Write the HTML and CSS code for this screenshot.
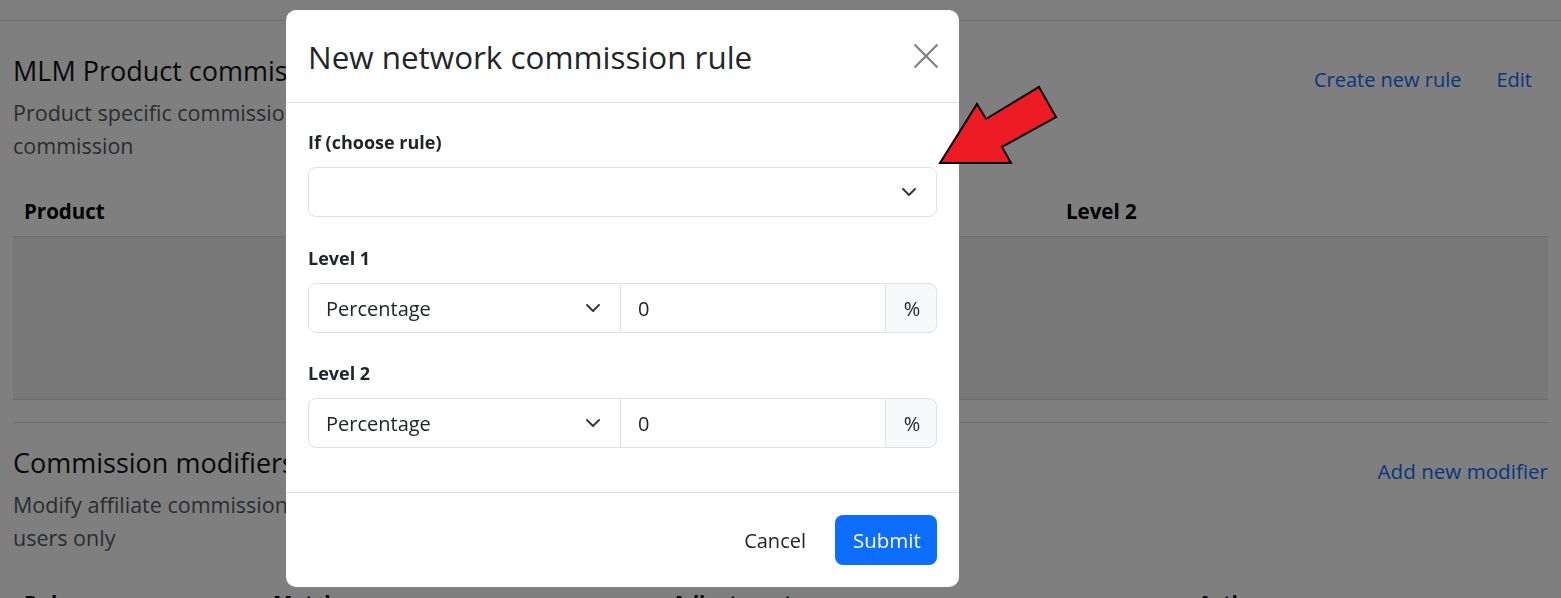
FILE: index.html
```html
<!DOCTYPE html>
<html lang="en">
<head>
<meta charset="utf-8">
<title>Network commission</title>
<link rel="stylesheet" href="styles.css">
</head>
<body>
<div class="topbar"></div>
<main class="content">
  <section class="section">
    <div class="section-head">
      <div class="section-text text-a">
        <h4 class="section-title">MLM Product commissions</h4>
        <p class="section-desc">Product specific commission rules override the default commission</p>
      </div>
      <div class="section-links">
        <a class="link-btn" href="#">Create new rule</a>
        <a class="link-btn" href="#">Edit</a>
      </div>
    </div>
    <div class="table">
      <div class="thead thead-3">
        <div>Product</div>
        <div>Level 1</div>
        <div>Level 2</div>
      </div>
      <div class="tbody"></div>
    </div>
  </section>
  <hr class="divider">
  <section class="section section-2">
    <div class="section-head">
      <div class="section-text text-b">
        <h4 class="section-title">Commission modifiers</h4>
        <p class="section-desc">Modify affiliate commission based on custom rules for the referred users only</p>
      </div>
      <div class="section-links links-tight">
        <a class="link-btn" href="#">Add new modifier</a>
      </div>
    </div>
    <div class="table">
      <div class="thead thead-4">
        <div>Rule</div>
        <div>Match</div>
        <div>Adjustment</div>
        <div>Action</div>
      </div>
    </div>
  </section>
</main>

<div class="backdrop"></div>

<div class="modal">
  <div class="modal-header">
    <h5 class="modal-title">New network commission rule</h5>
    <button class="btn-close" aria-label="Close">
      <svg width="26" height="26" viewBox="0 0 26 26"><path d="M1.5 1.5 L24.5 24.5 M24.5 1.5 L1.5 24.5" stroke="#808080" stroke-width="2.2" fill="none"/></svg>
    </button>
  </div>
  <div class="modal-body">
    <label class="form-label">If (choose rule)</label>
    <div class="form-select full">
      <span></span>
      <svg class="chev" width="16" height="16" viewBox="0 0 16 16"><path d="m2 5 6 6 6-6" stroke="#343a40" stroke-width="2" fill="none" stroke-linecap="round" stroke-linejoin="round"/></svg>
    </div>

    <label class="form-label">Level 1</label>
    <div class="input-group">
      <div class="form-select grp-select">
        <span>Percentage</span>
        <svg class="chev" width="16" height="16" viewBox="0 0 16 16"><path d="m2 5 6 6 6-6" stroke="#343a40" stroke-width="2" fill="none" stroke-linecap="round" stroke-linejoin="round"/></svg>
      </div>
      <div class="form-input">0</div>
      <div class="addon">%</div>
    </div>

    <label class="form-label">Level 2</label>
    <div class="input-group">
      <div class="form-select grp-select">
        <span>Percentage</span>
        <svg class="chev" width="16" height="16" viewBox="0 0 16 16"><path d="m2 5 6 6 6-6" stroke="#343a40" stroke-width="2" fill="none" stroke-linecap="round" stroke-linejoin="round"/></svg>
      </div>
      <div class="form-input">0</div>
      <div class="addon">%</div>
    </div>
  </div>
  <div class="modal-footer">
    <button class="btn btn-cancel">Cancel</button>
    <button class="btn btn-primary">Submit</button>
  </div>
</div>

<svg class="pointer-arrow" width="130" height="90" viewBox="930 80 130 90">
  <polygon points="940,163 977,104 986,119 1039,87 1056,117 1002,147 1011,163" fill="#ed1c24" stroke="#000" stroke-width="2" stroke-linejoin="miter"/>
</svg>
</body>
</html>
```

FILE: styles.css
```css
* { box-sizing: border-box; }

html, body {
  margin: 0;
  padding: 0;
  background: #ffffff;
  color: #212529;
  font-family: "Open Sans", "Noto Sans", "Liberation Sans", sans-serif;
  font-size: 20px;
  overflow: hidden;
  height: 598px;
}

.topbar {
  height: 21px;
  border-bottom: 1px solid #dcdcdc;
}

.content {
  padding: 0 13px;
}

.section-head {
  display: flex;
  justify-content: space-between;
  align-items: flex-start;
}

.section {
  padding-top: 34px;
}

.section-2 {
  padding-top: 1px;
}

.text-a {
  max-width: 620px;
}

.text-b {
  max-width: 695px;
}

.section-title {
  margin: 0;
  font-size: 27px;
  font-weight: 500;
  line-height: 31px;
  color: #111;
  white-space: nowrap;
}

.section-desc {
  margin: 10px 0 0;
  font-size: 21.5px;
  line-height: 33px;
  color: #555b61;
}

.section-links {
  display: flex;
  gap: 35px;
  padding-top: 10px;
  margin-right: 16px;
}

.links-tight {
  margin-right: 0;
  padding-top: 9px;
}

.link-btn {
  color: #0d6efd;
  text-decoration: none;
  font-size: 20px;
  line-height: 30px;
}

.links-tight .link-btn {
  font-size: 20.6px;
}

.table {
  margin-top: 24px;
}

.thead {
  display: grid;
  height: 50px;
  align-items: center;
  padding: 0 11px;
  font-weight: 700;
  font-size: 20.5px;
  color: #000;
}

.thead-3 {
  grid-template-columns: 521px 521px 1fr;
}

.thead-4 {
  grid-template-columns: 249px 399px 526px 1fr;
}

.tbody {
  height: 164px;
  background: #f0f0f0;
  border-top: 1px solid #dedede;
  border-bottom: 1px solid #dedede;
}

.divider {
  margin: 22px 0 23px;
  border: 0;
  border-top: 1px solid #dedede;
}

/* overlay */
.backdrop {
  position: fixed;
  inset: 0;
  background: rgba(0, 0, 0, 0.5);
}

.modal {
  position: fixed;
  left: 286px;
  top: 10px;
  width: 673px;
  height: 577px;
  background: #fff;
  border-radius: 10px;
  display: flex;
  flex-direction: column;
}

.modal-header {
  height: 93px;
  padding: 0 20px 0 22px;
  border-bottom: 1px solid #dee2e6;
  display: flex;
  align-items: center;
  justify-content: space-between;
}

.modal-title {
  margin: 2px 0 0;
  font-size: 31.4px;
  font-weight: 500;
  color: #212529;
  line-height: 38px;
}

.btn-close {
  border: 0;
  background: none;
  padding: 0;
  width: 26px;
  height: 26px;
  display: flex;
}

.modal-body {
  flex: 1;
  padding: 26px 22px 0;
}

.form-label {
  display: block;
  font-size: 18px;
  font-weight: 700;
  line-height: 27px;
  margin-bottom: 11px;
  color: #212529;
}

.form-select,
.form-input,
.addon {
  height: 50px;
  border: 1px solid #dee2e6;
  display: flex;
  align-items: center;
  font-size: 20px;
  color: #212529;
}

.form-select {
  justify-content: space-between;
  padding: 0 19px 0 17px;
  background: #fff;
}

.full {
  border-radius: 8px;
  margin-bottom: 28px;
}

.input-group {
  display: flex;
  margin-bottom: 27px;
}

.grp-select {
  width: 313px;
  border-radius: 8px 0 0 8px;
}

.form-input {
  flex: 1;
  margin-left: -1px;
  padding: 0 17px;
}

.addon {
  width: 52px;
  margin-left: -1px;
  justify-content: center;
  background: #f8f9fa;
  border-radius: 0 8px 8px 0;
  padding-left: 2px;
}

.modal-footer {
  height: 95px;
  border-top: 1px solid #dee2e6;
  display: flex;
  align-items: center;
  justify-content: flex-end;
  padding: 0 22px 0 22px;
  gap: 12px;
}

.btn {
  height: 50px;
  border: 0;
  border-radius: 8px;
  font-family: inherit;
  font-size: 20px;
  padding: 0 17px;
  cursor: pointer;
}

.btn-cancel {
  background: transparent;
  color: #212529;
  padding: 0 17px 0 15px;
}

.btn-primary {
  background: #0d6efd;
  color: #fff;
  padding: 0 17px 0 18px;
  font-size: 20.5px;
  width: 102px;
}

.pointer-arrow {
  position: fixed;
  left: 930px;
  top: 80px;
}
```
